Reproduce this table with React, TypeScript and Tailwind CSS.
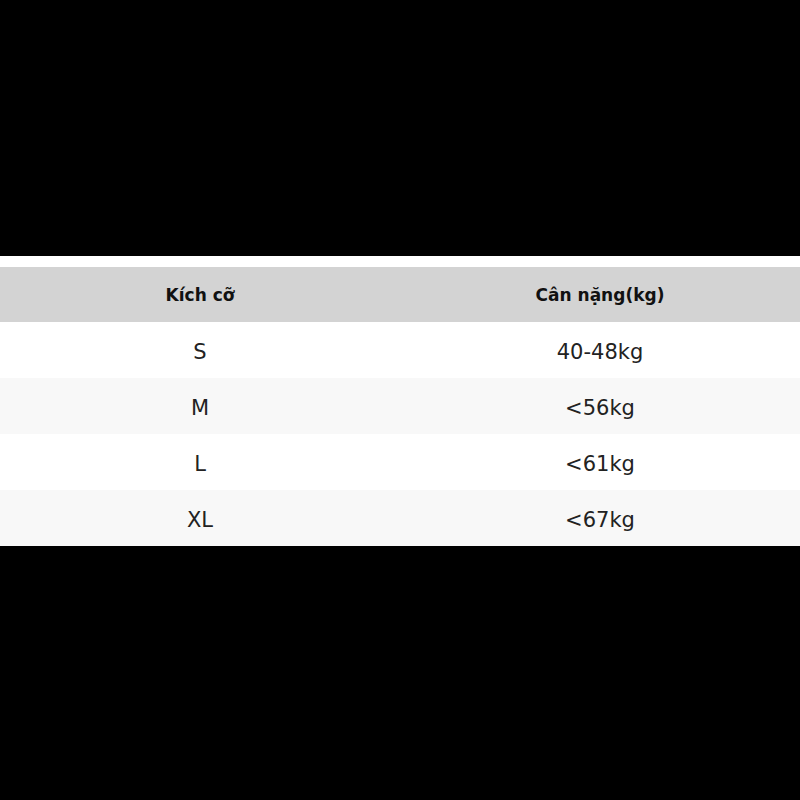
export default function App() {
  const rows = [
    { size: "S", weight: "40-48kg" },
    { size: "M", weight: "<56kg" },
    { size: "L", weight: "<61kg" },
    { size: "XL", weight: "<67kg" },
  ];

  return (
    <div
      className="min-h-screen bg-black flex flex-col justify-center pt-[2px]"
      style={{ fontFamily: '"DejaVu Sans", sans-serif' }}
    >
      <div className="bg-white pt-[11px]">
        <table className="w-full border-collapse table-fixed">
          <thead>
            <tr className="bg-[#d3d3d3] h-[55px]">
              <th className="text-[17px] font-bold text-[#111] text-center pt-[2px]">Kích cỡ</th>
              <th className="text-[17px] font-bold text-[#111] text-center pt-[2px]">Cân nặng(kg)</th>
            </tr>
          </thead>
          <tbody>
            {rows.map((row, i) => (
              <tr key={row.size} className={i % 2 === 1 ? "bg-[#f8f8f8] h-[56px]" : "bg-white h-[56px]"}>
                <td className="text-[21px] text-[#222] text-center pt-[5px]">{row.size}</td>
                <td className="text-[21px] text-[#222] text-center pt-[5px]">{row.weight}</td>
              </tr>
            ))}
          </tbody>
        </table>
      </div>
    </div>
  );
}
